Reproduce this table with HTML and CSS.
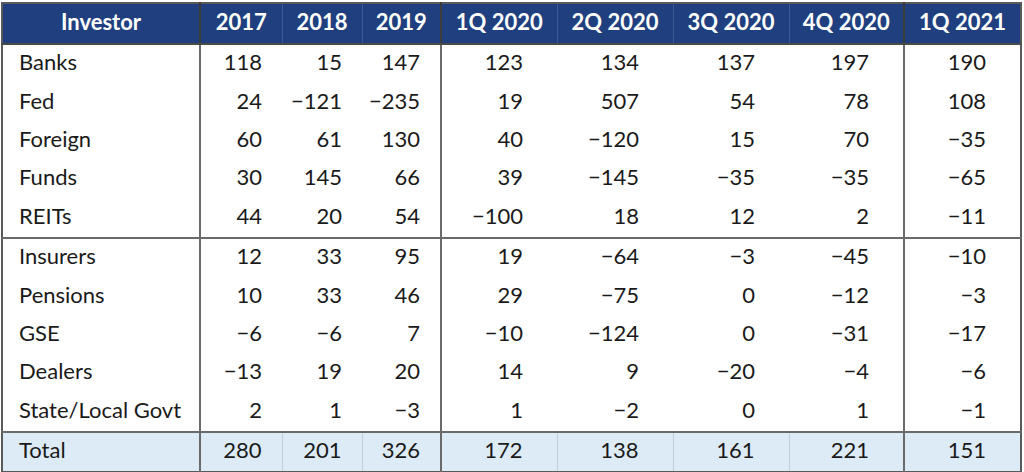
FILE: index.html
```html
<!DOCTYPE html>
<html>
<head>
<meta charset="utf-8">
<link rel="stylesheet" href="styles.css">
</head>
<body>
<table class="grid">
  <colgroup>
    <col class="c-name"><col class="c-y1"><col class="c-y2"><col class="c-y3">
    <col class="c-q"><col class="c-q"><col class="c-q"><col class="c-q4"><col class="c-q5">
  </colgroup>
  <thead>
    <tr>
      <th class="name">Investor</th>
      <th class="gs">2017</th><th>2018</th><th>2019</th>
      <th class="gs">1Q 2020</th><th>2Q 2020</th><th>3Q 2020</th><th>4Q 2020</th>
      <th class="gs">1Q 2021</th>
    </tr>
  </thead>
  <tbody>
    <tr><td class="name">Banks</td><td class="gs y">118</td><td class="y">15</td><td class="y">147</td><td class="gs q">123</td><td class="q">134</td><td class="q">137</td><td class="q">197</td><td class="gs q">190</td></tr>
    <tr><td class="name">Fed</td><td class="gs y">24</td><td class="y">−121</td><td class="y">−235</td><td class="gs q">19</td><td class="q">507</td><td class="q">54</td><td class="q">78</td><td class="gs q">108</td></tr>
    <tr><td class="name">Foreign</td><td class="gs y">60</td><td class="y">61</td><td class="y">130</td><td class="gs q">40</td><td class="q">−120</td><td class="q">15</td><td class="q">70</td><td class="gs q">−35</td></tr>
    <tr><td class="name">Funds</td><td class="gs y">30</td><td class="y">145</td><td class="y">66</td><td class="gs q">39</td><td class="q">−145</td><td class="q">−35</td><td class="q">−35</td><td class="gs q">−65</td></tr>
    <tr class="grpend"><td class="name">REITs</td><td class="gs y">44</td><td class="y">20</td><td class="y">54</td><td class="gs q">−100</td><td class="q">18</td><td class="q">12</td><td class="q">2</td><td class="gs q">−11</td></tr>
    <tr><td class="name">Insurers</td><td class="gs y">12</td><td class="y">33</td><td class="y">95</td><td class="gs q">19</td><td class="q">−64</td><td class="q">−3</td><td class="q">−45</td><td class="gs q">−10</td></tr>
    <tr><td class="name">Pensions</td><td class="gs y">10</td><td class="y">33</td><td class="y">46</td><td class="gs q">29</td><td class="q">−75</td><td class="q">0</td><td class="q">−12</td><td class="gs q">−3</td></tr>
    <tr><td class="name">GSE</td><td class="gs y">−6</td><td class="y">−6</td><td class="y">7</td><td class="gs q">−10</td><td class="q">−124</td><td class="q">0</td><td class="q">−31</td><td class="gs q">−17</td></tr>
    <tr><td class="name">Dealers</td><td class="gs y">−13</td><td class="y">19</td><td class="y">20</td><td class="gs q">14</td><td class="q">9</td><td class="q">−20</td><td class="q">−4</td><td class="gs q">−6</td></tr>
    <tr class="grpend"><td class="name">State/Local Govt</td><td class="gs y">2</td><td class="y">1</td><td class="y">−3</td><td class="gs q">1</td><td class="q">−2</td><td class="q">0</td><td class="q">1</td><td class="gs q">−1</td></tr>
    <tr class="total"><td class="name">Total</td><td class="gs y">280</td><td class="y">201</td><td class="y">326</td><td class="gs q">172</td><td class="q">138</td><td class="q">161</td><td class="q">221</td><td class="gs q">151</td></tr>
  </tbody>
</table>
</body>
</html>
```
FILE: styles.css
```css
html, body {
  margin: 0;
  padding: 0;
  background: #ffffff;
}
body {
  padding: 2px 0 0 1px;
  font-family: Lato, "Liberation Sans", sans-serif;
  color: #1a1a1a;
}
.grid {
  border-collapse: collapse;
  table-layout: fixed;
  width: 1021px;
  border: 2px solid #5a5a5a;
  font-size: 22px;
}
.c-name { width: 198px; }
.c-y1 { width: 82px; }
.c-y2 { width: 80px; }
.c-y3 { width: 79px; }
.c-q { width: 116px; }
.c-q4 { width: 115px; }
.c-q5 { width: 117px; }

th {
  background: #1f3f7e;
  color: #ffffff;
  font-weight: 700;
  font-size: 22px;
  line-height: 1;
  height: 36px;
  padding: 0 0 3px 0;
  text-align: center;
  border-left: 1px solid #3a5a92;
  border-bottom: 2px solid #4a4a4a;
}
th.name { border-left: none; }
th.gs { border-left: 2px solid #3c3c3c; }

td {
  height: 34.4px;
  padding: 0 0 4px 0;
  line-height: 1;
  white-space: nowrap;
}
td.name {
  padding-left: 16px;
  text-align: left;
}
td.gs { border-left: 2px solid #6a6a6a; }
td.y {
  text-align: right;
  padding-right: 20px;
}
td.q {
  text-align: right;
  padding-right: 34px;
}
tr.grpend td { border-bottom: 2px solid #6a6a6a; }
tr.total td {
  background: #ddebf7;
}
tr.total td.y:not(.gs),
tr.total td.q:not(.gs) { border-left: 1px solid #c4ccd4; }
```
